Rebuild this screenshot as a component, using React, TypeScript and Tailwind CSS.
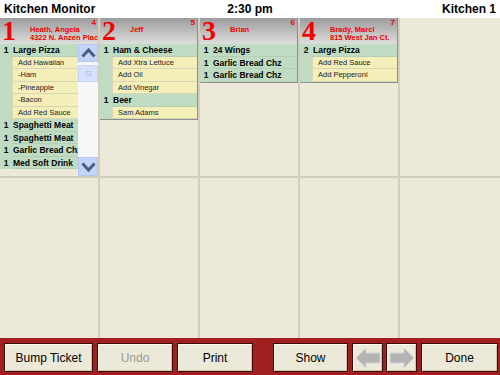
import React from 'react'

type Line = { qty?: number; text: string }

type Ticket = {
    seat: number
    order: number
    name: string
    address?: string
    lines: Line[]
    scroll?: boolean
}

const tickets: Ticket[] = [
    {
        seat: 1,
        order: 4,
        name: 'Heath, Angela',
        address: '4322 N. Anzen Place',
        scroll: true,
        lines: [
            { qty: 1, text: 'Large Pizza' },
            { text: 'Add Hawaiian' },
            { text: '-Ham' },
            { text: '-Pineapple' },
            { text: '-Bacon' },
            { text: 'Add Red Sauce' },
            { qty: 1, text: 'Spaghetti Meat' },
            { qty: 1, text: 'Spaghetti Meat' },
            { qty: 1, text: 'Garlic Bread Chz' },
            { qty: 1, text: 'Med Soft Drink' }
        ]
    },
    {
        seat: 2,
        order: 5,
        name: 'Jeff',
        lines: [
            { qty: 1, text: 'Ham & Cheese' },
            { text: 'Add Xtra Lettuce' },
            { text: 'Add Oil' },
            { text: 'Add Vinegar' },
            { qty: 1, text: 'Beer' },
            { text: 'Sam Adams' }
        ]
    },
    {
        seat: 3,
        order: 6,
        name: 'Brian',
        lines: [
            { qty: 1, text: '24 Wings' },
            { qty: 1, text: 'Garlic Bread Chz' },
            { qty: 1, text: 'Garlic Bread Chz' }
        ]
    },
    {
        seat: 4,
        order: 7,
        name: 'Brady, Marci',
        address: '815 West Jan Ct.',
        lines: [
            { qty: 2, text: 'Large Pizza' },
            { text: 'Add Red Sauce' },
            { text: 'Add Pepperoni' }
        ]
    }
]

function Chevron({ up }: { up: boolean }) {
    return (
        <svg width="15" height="10" viewBox="0 0 15 10">
            <polyline
                points={up ? '1.5,8.5 7.5,2 13.5,8.5' : '1.5,1.5 7.5,8 13.5,1.5'}
                fill="none"
                stroke="#4a5d85"
                strokeWidth="3"
            />
        </svg>
    )
}

function ScrollBar() {
    return (
        <div className="w-[20px] flex flex-col bg-[#f7f7f7]">
            <div className="h-[18px] bg-[#c3d3fa] flex items-center justify-center border border-[#b6c6ef]">
                <Chevron up />
            </div>
            <div className="mt-[3px] h-[17px] bg-[#d6e1fb] border border-[#c6d3f3] flex items-center justify-center">
                <div className="w-[5px] h-[5px] border border-[#b9c7ea]" />
            </div>
            <div className="flex-1" />
            <div className="h-[19px] bg-[#c3d3fa] flex items-center justify-center border border-[#b6c6ef]">
                <Chevron up={false} />
            </div>
        </div>
    )
}

function TicketLine({ line }: { line: Line }) {
    const item = line.qty !== undefined
    return (
        <div className="flex h-[12.5px] bg-[#bfdcc3]">
            <div className="w-[12px] shrink-0 text-center text-[8.5px] font-bold leading-[12.5px] text-black">
                {item ? line.qty : ''}
            </div>
            {item ? (
                <div className="flex-1 min-w-0 overflow-hidden whitespace-nowrap pl-[1px] text-[8.5px] font-bold leading-[12.5px] text-black border-b border-[#b3cfb6]">
                    {line.text}
                </div>
            ) : (
                <div className="flex-1 min-w-0 overflow-hidden whitespace-nowrap pl-[5px] bg-[#f4eeb9] text-[7.5px] leading-[12px] text-[#222] border-b border-l border-[#d9d5b4]">
                    {line.text}
                </div>
            )}
        </div>
    )
}

function TicketCard({ ticket }: { ticket: Ticket }) {
    return (
        <div
            className={
                ticket.scroll
                    ? 'w-[98px] h-full flex flex-col'
                    : 'w-[98px] flex flex-col border-r border-b border-[#8e8e8e]'
            }
        >
            <div className="relative h-[26px] shrink-0 flex bg-gradient-to-b from-[#9c9c9c] to-[#dedede]">
                <div className="w-[30px] h-[26px] shrink-0 pl-[2px] font-['Liberation_Serif',serif] font-bold text-[28px] leading-[26px] text-[#f20000]">
                    {ticket.seat}
                </div>
                <div className="flex-1 min-w-0 pt-[8px] text-[7.5px] font-bold leading-[7.5px] text-[#f20000] whitespace-nowrap overflow-hidden">
                    <div>{ticket.name}</div>
                    {ticket.address && <div>{ticket.address}</div>}
                </div>
                <span className="absolute right-[2px] top-[1px] text-[8px] font-bold leading-[8px] text-[#f20000]">
                    {ticket.order}
                </span>
            </div>
            <div className="flex flex-1 min-h-0">
                <div className="flex-1 min-w-0 flex flex-col">
                    {ticket.lines.map((line, i) => (
                        <TicketLine key={i} line={line} />
                    ))}
                </div>
                {ticket.scroll && <ScrollBar />}
            </div>
        </div>
    )
}

function ArrowIcon({ left }: { left: boolean }) {
    return (
        <svg width="26" height="22" viewBox="0 0 26 22">
            <polygon
                points={
                    left
                        ? '1,11 11,1 11,6 25,6 25,16 11,16 11,21'
                        : '25,11 15,1 15,6 1,6 1,16 15,16 15,21'
                }
                fill="#b4b4b4"
                stroke="#d6d6d6"
                strokeWidth="1"
            />
        </svg>
    )
}

const btn =
    'h-[29px] bg-[#ece9d8] border border-[#3c0c0c] shadow-[inset_1px_1px_0_#fbfaf3,inset_-1px_-1px_0_#c9c4ad] flex items-center justify-center text-[12px]'

export default function App() {
    const cells = Array.from({ length: 10 }, (_, i) => i)

    return (
        <div className="w-[500px] h-[375px] flex flex-col overflow-hidden bg-[#ece9d8] font-['Liberation_Sans',Arial,sans-serif]">
            <div className="h-[18px] shrink-0 bg-white grid grid-cols-3 items-center px-[4px] text-[12px] font-bold text-black">
                <span>Kitchen Monitor</span>
                <span className="text-center">2:30 pm</span>
                <span className="text-right">Kitchen 1</span>
            </div>

            <div className="h-[320px] shrink-0 grid grid-cols-[100px_100px_100px_100px_100px] grid-rows-2">
                {cells.map((i) => (
                    <div
                        key={i}
                        className={
                            (i % 5 === 4 ? '' : 'border-r-2 ') +
                            (i < 5 ? 'border-b-2 ' : '') +
                            'border-[#d3cebb] overflow-hidden'
                        }
                    >
                        {i < 4 && <TicketCard ticket={tickets[i]} />}
                    </div>
                ))}
            </div>

            <div className="flex-1 bg-[#a21f1f] flex items-start pt-[5px] pl-[4px] text-black">
                <button className={btn + ' w-[89px]'}>Bump Ticket</button>
                <button className={btn + ' w-[76px] ml-[4px] text-[#9a9a9a]'}>Undo</button>
                <button className={btn + ' w-[76px] ml-[4px]'}>Print</button>
                <button className={btn + ' w-[75px] ml-[20px]'}>Show</button>
                <button className={btn + ' w-[31px] ml-[4px]'}>
                    <ArrowIcon left />
                </button>
                <button className={btn + ' w-[31px] ml-[3px]'}>
                    <ArrowIcon left={false} />
                </button>
                <button className={btn + ' w-[77px] ml-[4px]'}>Done</button>
            </div>
        </div>
    )
}
